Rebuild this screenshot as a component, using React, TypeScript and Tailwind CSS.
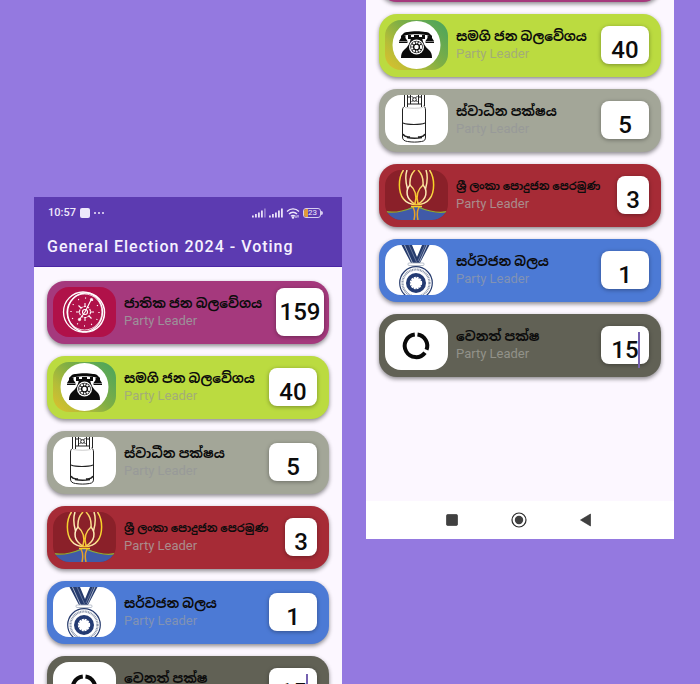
import type { ReactNode } from "react";

function WheelIcon() {
  return (
    <svg viewBox="0 0 63 50" className="h-full w-full" fill="none" stroke="#fff">
      <rect width="63" height="50" fill="#b01149" stroke="none" />
      <ellipse cx="30" cy="25" rx="19.5" ry="20" strokeWidth="1.3" />
      <ellipse cx="33" cy="25.500" rx="18.500" ry="19.5" strokeWidth="1.5" />
      <ellipse cx="31.500" cy="25" rx="17.500" ry="18" strokeWidth="0.800" />
      <g strokeWidth="1.1">
        <path d="M32 25 38.500 12M32 25 26.500 32.500M27 25h-4M37 25h4M32 19.500V16M32 30.500V34M28 21l-2.500-2.500M36 29l2.500 2.500" />
        <circle cx="32" cy="25" r="5.500" strokeDasharray="2.400 1" />
        <circle cx="32" cy="25" r="2.500" />
      </g>
      <circle cx="32" cy="25" r="14" strokeWidth="1.3" strokeDasharray="1 6.300" />
      <circle cx="38.500" cy="12.500" r="1.200" fill="#fff" strokeWidth="0.5" />
      <circle cx="26.500" cy="32.500" r="1.300" fill="#fff" strokeWidth="0.5" />
    </svg>
  );
}

function PhoneIcon() {
  return (
    <svg viewBox="0 0 63 50" className="h-full w-full">
      <defs>
        <linearGradient id="phone-glow" x1="0" y1="1" x2="1" y2="0.2">
          <stop offset="0" stopColor="#dfc02c" />
          <stop offset="0.3" stopColor="#b5bd38" />
          <stop offset="0.6" stopColor="#7fae45" />
          <stop offset="1" stopColor="#52a659" />
        </linearGradient>
      </defs>
      <rect width="63" height="50" fill="url(#phone-glow)" />
      <circle cx="31.500" cy="25" r="24" fill="#fff" />
      <g fill="#0b0b0b">
        <path d="M16 18c1-5 4-6 7-6 4-1 13-1 17 0 3 0 6 1 7 6l-1 0c-1-2-3-3-5-3-5-1-14-1-19 0-2 0-4 1-5 3z" />
        <path d="M16 15.500h4.500v2.500l2 3v2H14v-2l2-3zM42.500 15.500H47v2.500l2 3v2h-8.500v-2l2-3z" />
        <path d="M23 15v4h17v-4h-3v2h-3v-2h-5v2h-3v-2z" />
        <path d="M26 18h11c1 5 3 9 7 12 2 2 3 4 3 8H16c0-4 1-6 3-8 4-3 6-7 7-12z" />
      </g>
      <circle cx="31.500" cy="27" r="7.500" fill="#fff" />
      <circle cx="31.500" cy="27" r="6.200" fill="#0b0b0b" />
      <circle cx="31.500" cy="27" r="4.600" fill="none" stroke="#fff" strokeWidth="2" strokeDasharray="2 0.900" />
      <circle cx="31.500" cy="27" r="2.200" fill="#fff" />
      <path d="M14 21.500h8.500M40.500 21.500H49" stroke="#fff" strokeWidth="0.500" />
    </svg>
  );
}

function CylinderIcon() {
  return (
    <svg viewBox="0 0 63 50" className="h-full w-full" fill="none" stroke="#222" strokeWidth="1">
      <rect width="63" height="50" fill="#fff" stroke="none" />
      <path d="M19.500 0v11M22.500 0v12M36.500 0v12M39.500 0v11M22.500 2h3M33.500 2h3M22.500 9h14M25.500 0v9M33.500 0v9" />
      <path d="m26.500 1 6 6M32.500 1l-6 6" />
      <circle cx="29.500" cy="4.500" r="1.800" fill="#fff" />
      <path d="M20 11c-1.500 1-2.500 2-2.500 4v27c0 3 2 4 5 4.500 5 .8 9 .8 14 0 3-.5 4-1.500 4-4.500V15c0-2-.5-3-2-4" />
      <path d="M18 28c5 2 17 2 22 0" strokeWidth="1.200" />
      <path d="M20 12.500c6 1 13 1 18 0" stroke="#999" strokeWidth="0.500" />
      <path d="M18 39c2 4 5 2.500 7 3M40 39c-2 4-5 2.500-7 3M22 42.500c5 1 10 1 15 0" strokeWidth="1.500" />
    </svg>
  );
}

function LotusIcon() {
  return (
    <svg viewBox="0 0 63 50" className="h-full w-full" fill="none">
      <defs>
        <linearGradient id="petal" gradientUnits="userSpaceOnUse" x1="14" y1="0" x2="49" y2="0">
          <stop offset="0" stopColor="#f4cf1f" />
          <stop offset="0.250" stopColor="#fff0cf" />
          <stop offset="0.500" stopColor="#f5c322" />
          <stop offset="0.750" stopColor="#fbe7b8" />
          <stop offset="1" stopColor="#f8d21c" />
        </linearGradient>
      </defs>
      <rect width="63" height="50" fill="#8a2029" />
      <path d="M0 42c9 2 19 0 28-6h6c9 6 19 8 29 6v8H0z" fill="#405aa8" />
      <path d="M0 41.500c9 2 18 0 28-4M63 41.500c-9 2-19 0-29-4" stroke="#8eae33" strokeWidth="1.300" />
      <path d="M28 37c2 4 2 9 1 13M34 37c-2 4-2 9-1 13" stroke="#e7a126" strokeWidth="1.500" />
      <g stroke="url(#petal)" strokeWidth="1.500">
        <path d="M18.500 0C13 8 13 22 18.500 29c3 4 8 5.500 13 5.500s10-1.500 13-5.500C50 22 50 8 44.500 0" />
        <path d="M22 0c-2 6-1.500 12 .5 19M41 0c2 6 1.500 12-.5 19" />
        <path d="M30 0c-4 4-5.500 9-5 15M33 0c4 4 5.500 9 5 15" />
        <path d="M25 15c-5 6-4 14 5 19 2-7 1-14-5-19zM38 15c5 6 4 14-5 19-2-7-1-14 5-19z" />
      </g>
      <path d="M26 36.500h11" stroke="#f5d32a" strokeWidth="1.500" />
    </svg>
  );
}

function MedalIcon() {
  return (
    <svg viewBox="0 0 63 50" className="h-full w-full" fill="none">
      <rect width="63" height="50" fill="#fff" />
      <path d="M16.500 0h10.500l5 12 5-12h7.500L35 18h-9z" fill="#263b6d" />
      <path d="m19.500 0 8 18M42 0l-7.500 17" stroke="#c2cadb" strokeWidth="0.800" />
      <path d="m24 0 7.500 17M40 0l-7 16" stroke="#8d9ab8" strokeWidth="0.600" />
      <rect x="23" y="18" width="16" height="2.500" rx="1" fill="#fff" stroke="#a9b1c0" strokeWidth="0.800" />
      <circle cx="31" cy="38" r="16.300" fill="#fff" stroke="#263b6d" strokeWidth="1.200" />
      <circle cx="31" cy="38" r="13.500" stroke="#8b96ac" strokeWidth="2.200" strokeDasharray="1 0.600" />
      <circle cx="31" cy="38" r="10" fill="#233a72" />
      <circle cx="31" cy="38" r="5.200" fill="#fff" stroke="#fff" strokeWidth="2" strokeDasharray="2 0.720" />
    </svg>
  );
}

function RingIcon() {
  return (
    <svg viewBox="0 0 63 50" className="h-full w-full" fill="none" stroke="#0a0a0a" strokeWidth="4">
      <rect width="63" height="50" fill="#fff" stroke="none" />
      <path d="M32.500 14.600A11.300 11.300 0 0 1 41.500 29.800" />
      <path d="M40 32.700A11.300 11.300 0 1 1 29.800 14.600" />
    </svg>
  );
}

type Party = {
  id: string;
  name: string;
  votes: string;
  icon: ReactNode;
  card: string;
  leader: string;
  title?: string;
  box?: string;
  margin?: string;
  focused?: boolean;
};

const parties: Party[] = [
  { id: "npp", name: "ජාතික ජන බලවේගය", votes: "159", icon: <WheelIcon />, card: "bg-[#a5397d]", leader: "text-[#9d9099]", box: "h-12 w-12 pt-0", margin: "mr-[5px] mt-[7px]" },
  { id: "sjb", name: "සමගි ජන බලවේගය", votes: "40", icon: <PhoneIcon />, card: "bg-[#bbdb40]", leader: "text-[#a3ad78]" },
  { id: "ind", name: "ස්වාධීන පක්ෂය", votes: "5", icon: <CylinderIcon />, card: "bg-[#a3a698]", leader: "text-[#989a98]" },
  { id: "slpp", name: "ශ්‍රී ලංකා පොදුජන පෙරමුණ", votes: "3", icon: <LotusIcon />, card: "bg-[#a62b36]", leader: "text-[#aa8b8c]", title: "text-[11px]", box: "h-[38px] w-8 pt-2.5" },
  { id: "sb", name: "සර්වජන බලය", votes: "1", icon: <MedalIcon />, card: "bg-[#4c7ad5]", leader: "text-[#8192b4]" },
  { id: "other", name: "වෙනත් පක්ෂ", votes: "15", icon: <RingIcon />, card: "bg-[#616155]", leader: "text-[#929289]", focused: true },
];

function PartyCard({ party, screen }: { party: Party; screen: string }) {
  const fieldId = `${screen}-${party.id}`;
  return (
    <li className={`flex h-[63px] shrink-0 items-start rounded-[18px] pl-1.5 shadow-[0_2px_4px_rgba(0,0,0,0.45)] ${party.card}`}>
      <div className="mt-1.5 h-[50px] w-[63px] shrink-0 overflow-hidden rounded-2xl">{party.icon}</div>
      <div className="ml-2 mt-[13px] min-w-0 flex-1">
        <label htmlFor={fieldId} className={`block h-[19px] whitespace-nowrap font-bold leading-5 text-[#0c0c0c] ${party.title ?? "text-[13px]"}`}>
          {party.name}
        </label>
        <p className={`text-[13px] leading-4 ${party.leader}`}>Party Leader</p>
      </div>
      <div className={`relative shrink-0 ${party.margin ?? "mr-3 mt-3"}`}>
        <input
          id={fieldId}
          type="text"
          inputMode="numeric"
          defaultValue={party.votes}
          className={`block rounded-lg bg-white text-center text-2xl font-medium leading-7 text-[#0c0c0c] shadow-[0_1px_4px_rgba(0,0,0,0.35)] outline-none ${party.box ?? "h-[38px] w-12 pt-2.5"}`}
        />
        {party.focused && <span className="absolute left-[37px] top-1.5 h-9 w-0.5 bg-[#7561b0]" />}
      </div>
    </li>
  );
}

function PartyList({ screen }: { screen: string }) {
  return (
    <ul className="flex flex-col gap-3">
      {parties.map((party) => (
        <PartyCard key={party.id} party={party} screen={screen} />
      ))}
    </ul>
  );
}

function Signal({ faded }: { faded?: boolean }) {
  return (
    <svg viewBox="0 0 14 10" className="h-2.5 w-3.5" fill="#e9e2f8">
      <rect x="0" y="7.500" width="1.800" height="2" />
      <rect x="3" y="6" width="1.800" height="3.500" />
      <rect x="6" y="4.500" width="1.800" height="5" />
      <rect x="9" y="2.500" width="1.800" height="7" />
      <rect x="12" y="0.500" width="1.800" height="9" opacity={faded ? 0.4 : 1} />
    </svg>
  );
}

function StatusBar() {
  return (
    <div className="flex items-center justify-between pl-3.5 pr-[19px] pt-2 text-[#eee8fb]">
      <div className="flex items-center gap-1">
        <span className="text-[11px] font-medium leading-4">10:57</span>
        <span className="size-2.5 rounded-xs bg-[#eee8fb]" />
        <svg viewBox="0 0 10 2" className="h-0.5 w-2.5" fill="currentColor">
          <circle cx="1" cy="1" r="1" />
          <circle cx="5" cy="1" r="1" />
          <circle cx="9" cy="1" r="1" />
        </svg>
      </div>
      <div className="flex items-center gap-[3px]">
        <Signal faded />
        <Signal />
        <svg viewBox="0 0 14 12" className="h-3 w-3.5" fill="none" stroke="currentColor" strokeWidth="1.400">
          <path d="M1 4.500c3.500-3.500 8.500-3.500 12 0M3 7c2.300-2.400 5.700-2.400 8 0M5 9.300c1.200-1.200 2.800-1.200 4 0" />
          <circle cx="7" cy="10.500" r="0.600" fill="currentColor" />
          <path d="M10 11V8.500M12 8v2.500" strokeWidth="1" />
        </svg>
        <span className="flex items-center">
          <span className="flex h-2.5 w-[18px] items-center overflow-hidden rounded-[3px] border border-[#d7cdf0]">
            <span className="h-full w-1 bg-[#e09a3a]" />
            <span className="text-[8px] leading-none">23</span>
          </span>
          <span className="h-1 w-0.5 rounded-r-xs bg-[#d7cdf0]" />
        </span>
      </div>
    </div>
  );
}

export default function App() {
  return (
    <main className="flex h-screen items-start gap-6 overflow-hidden bg-[#9479e0] pl-[34px] pr-[26px] font-[Roboto,'Noto_Sans_Sinhala','Noto_Sans',sans-serif]">
      <section className="mt-[197px] min-w-0 flex-1 bg-[#fcf7ff]">
        <header className="h-[70px] border-b border-[#4a26a5] bg-[#5c3bb1]">
          <StatusBar />
          <h1 className="mt-3.5 whitespace-nowrap pl-[13px] text-base font-medium leading-6 tracking-[1px] text-[#f6f1ff]">
            General Election 2024 - Voting
          </h1>
        </header>
        <div className="px-[13px] py-3.5">
          <PartyList screen="top" />
        </div>
      </section>

      <section className="min-w-0 flex-1 bg-[#fcf7ff]">
        <div className="flex h-[501px] flex-col justify-end overflow-hidden px-[13px] pb-[124px]">
          <PartyList screen="bottom" />
        </div>
        <nav aria-label="System navigation" className="flex h-[38px] items-center justify-center gap-[51px] bg-white pr-0.5 text-[#404040]">
          <button type="button" aria-label="Recent apps">
            <svg viewBox="0 0 16 16" className="block size-4" fill="currentColor">
              <rect x="2.500" y="2.500" width="11" height="11" rx="1.200" stroke="#2a2a2a" strokeWidth="0.600" />
            </svg>
          </button>
          <button type="button" aria-label="Home">
            <svg viewBox="0 0 16 16" className="block size-4" fill="currentColor">
              <circle cx="8" cy="8" r="7" fill="none" stroke="#2a2a2a" strokeWidth="1.200" />
              <circle cx="8" cy="8" r="4.200" />
            </svg>
          </button>
          <button type="button" aria-label="Back">
            <svg viewBox="0 0 16 16" className="block size-4" fill="currentColor">
              <path d="M2.500 8 12.500 2v12z" stroke="#2a2a2a" strokeWidth="0.600" />
            </svg>
          </button>
        </nav>
      </section>
    </main>
  );
}
